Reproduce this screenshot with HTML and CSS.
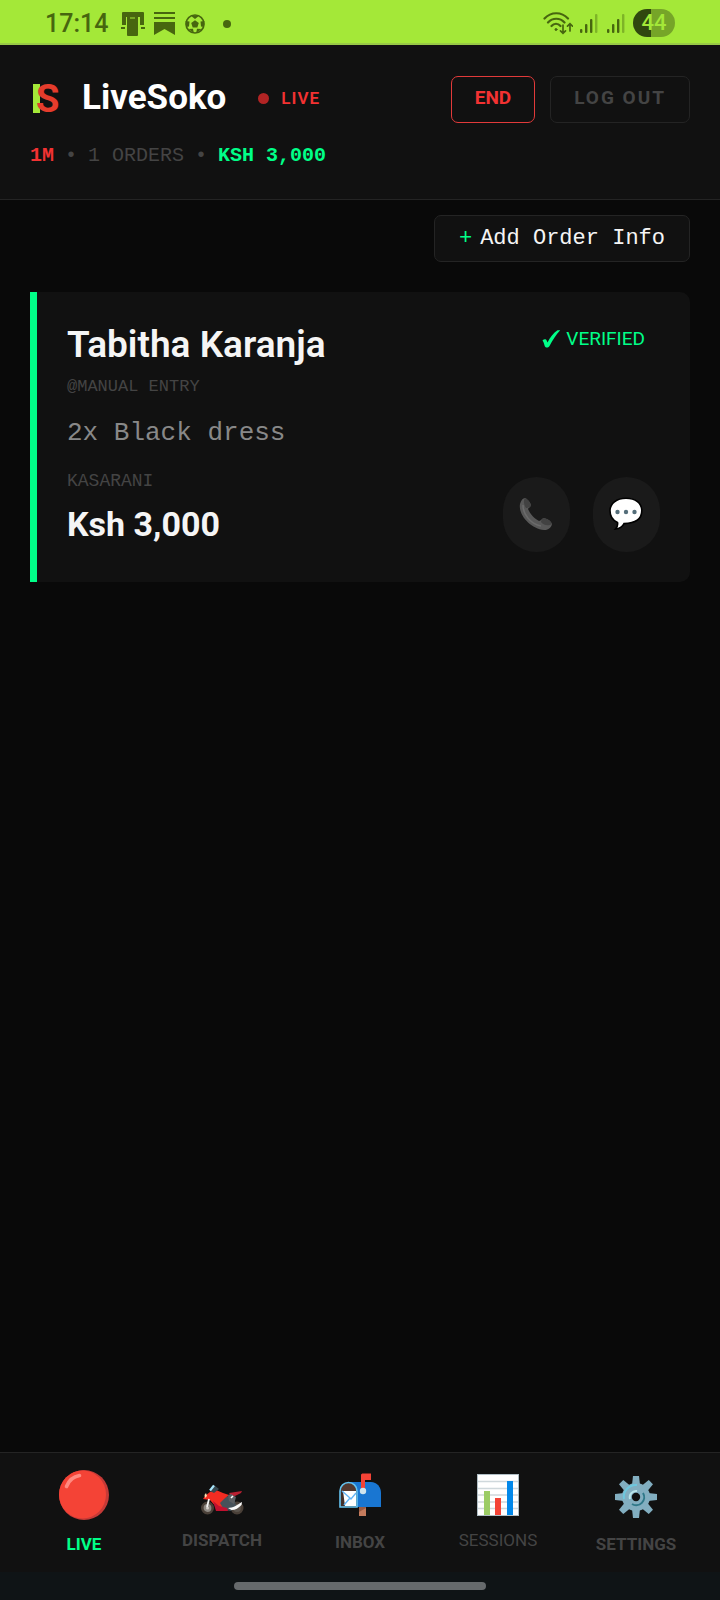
FILE: index.html
```html
<!DOCTYPE html>
<html lang="en">
<head>
    <meta charset="UTF-8">
    <meta name="viewport" content="width=device-width, initial-scale=1.0">
    <title>LiveSoko</title>
    <link rel="stylesheet" href="styles.css">
</head>
<body>
    <div class="status-bar">
        <div class="status-left">
            <span class="clock">17:14</span>
            <svg width="26" height="24" viewBox="0 0 26 24" fill="#47660f">
                <path d="M3 0h20q1 0 1 1v12h-4V5H6v8H2V1q0-1 1-1z"/>
                <path d="M1 15h4v2H1zM21 15h4v2h-4z"/>
                <rect x="7" y="4" width="11" height="20" rx="1"/>
                <path d="M10 5.500h5v1h-5z" fill="#a4e838"/>
            </svg>
            <svg width="22" height="24" viewBox="0 0 22 24" fill="#47660f">
                <path d="M0 0h21v2H0zM0 5h21v2H0zM0 10h21v13l-10.500-6L0 23z"/>
            </svg>
            <svg class="ball" width="20" height="20" viewBox="0 0 20 20">
                <circle cx="10" cy="10" r="9" fill="none" stroke="#47660f" stroke-width="1.600"/>
                <g fill="#47660f">
                    <path d="M10 6.200l3.800 2.800-1.500 4.400H7.700L6.200 9z"/>
                    <path d="M5.500 1.500h9L10 5zM.5 7l4 .5-.5 5-3 .5zM19.500 7l-4 .5.5 5 3 .5zM3.500 15l4.500-.3.800 4.300zM16.500 15l-4.500-.3-.8 4.300z"/>
                </g>
            </svg>
            <svg class="more-dot" width="8" height="8" viewBox="0 0 8 8"><circle cx="4" cy="4" r="4" fill="#47660f"/></svg>
        </div>
        <div class="status-right">
            <svg width="30" height="24" viewBox="0 0 30 24" fill="none" stroke="#47660f" stroke-width="2.200" stroke-linecap="round">
                <path d="M1.500 7.500C8 .5 18.500.5 25 7.500M5 11.500c4.500-5 12-5 16.500 0M8.500 15c2.500-3 6.500-3 9 0"/>
                <circle cx="13" cy="18.500" r="1" fill="#47660f" stroke-width="1"/>
                <path d="M20 14v8M17.500 19.800L20 22.300l2.500-2.500M27 20v-7M24.500 15.200L27 12.700l2.500 2.500" stroke-width="1.700"/>
            </svg>
            <svg width="21" height="21" viewBox="0 0 21 21" fill="#47660f">
                <rect x="1" y="16" width="2.400" height="4" rx="1"/>
                <rect x="6" y="11" width="2.400" height="9" rx="1"/>
                <rect x="11" y="6" width="2.400" height="14" rx="1"/>
                <rect x="16" y="1" width="2.400" height="19" rx="1" opacity=".4"/>
            </svg>
            <svg width="21" height="21" viewBox="0 0 21 21" fill="#47660f">
                <rect x="1" y="16" width="2.400" height="4" rx="1"/>
                <rect x="6" y="11" width="2.400" height="9" rx="1"/>
                <rect x="11" y="6" width="2.400" height="14" rx="1"/>
                <rect x="16" y="1" width="2.400" height="19" rx="1" opacity=".4"/>
            </svg>
            <span class="battery">44</span>
        </div>
    </div>

    <header class="header">
        <div class="header-row">
            <div class="brand">
                <svg class="logo" width="30" height="44" viewBox="0 0 30 44">
                    <rect x="3" y="8" width="7" height="29" fill="#a4e838"/>
                    <text class="logo-letter" x="6" y="36">S</text>
                </svg>
                <h1 class="title">LiveSoko</h1>
                <div class="live-badge"><span class="live-dot"></span>LIVE</div>
            </div>
            <div class="header-actions">
                <button type="button" class="btn btn-end">END</button>
                <button type="button" class="btn btn-logout">LOG OUT</button>
            </div>
        </div>
        <div class="stats">
            <span class="stats-time">1M</span>
            <span>•</span>
            <span>1 ORDERS</span>
            <span>•</span>
            <span class="stats-total">KSH 3,000</span>
        </div>
    </header>

    <main class="main">
        <div class="toolbar">
            <button type="button" class="btn btn-add"><span class="plus">+</span>Add Order Info</button>
        </div>

        <article class="order-card">
            <div class="order-top">
                <h2 class="customer">Tabitha Karanja</h2>
                <div class="verified">
                    <svg width="20" height="20" viewBox="0 0 20 20" fill="#00ff88">
                        <path d="M1.500 11.500c1.500-1.600 3.500-1.700 4.300.2l.7 1.800C9 8.500 12.500 4 16.500 1.300h2.700C15 5.800 11.500 11.500 8.500 17c-1.200 1.900-3.800 2.200-4.700.2C3 15 2.800 13 1.500 11.500z"/>
                    </svg>
                    VERIFIED
                </div>
            </div>
            <div class="handle">@MANUAL ENTRY</div>
            <div class="item">2x Black dress</div>
            <div class="order-bottom">
                <div>
                    <div class="location">KASARANI</div>
                    <div class="price">Ksh 3,000</div>
                </div>
                <div class="contact">
                    <button type="button" class="round-btn" aria-label="Call">
                        <svg width="34" height="34" viewBox="0 0 34 34">
                            <path d="M1 7C2 3 4 1 6 1c2 .5 5 4 6 7 0 2-3 3-3 4 2 5 7 10 11 12 2 0 3-3 5-3 4 1 7 3 8 6-1 4-4 6-8 6C12 32-1 18 1 7z" fill="#585858"/>
                            <path d="M6 1c2 .5 5 4 6 7 0 2-3 3-5 3C5 8 4 4 6 1zM22 25c0-2 2-4 3-4 4 1 7 3 8 6-3 2-8 2-11-2z" fill="#424242"/>
                            <path d="M4 8c0 10 8 19 18 21" fill="none" stroke="#6b6b6b" stroke-width="1.500"/>
                        </svg>
                    </button>
                    <button type="button" class="round-btn" aria-label="Message">
                        <svg width="34" height="34" viewBox="0 0 34 34">
                            <path d="M17 1.200c9.500 0 15.800 5 15.800 12.600S27 26.300 15 26.600c-1.500 3-4 5-8.500 5.400 2-2 2.500-4 2-6.500C4 23.500 1 19 1 13.800 1 6.500 7.500 1.200 17 1.200z" fill="#fff" stroke="#000" stroke-width="1.600"/>
                            <g fill="#546e7a">
                                <circle cx="8.500" cy="15" r="2.200"/>
                                <circle cx="17" cy="15" r="2.200"/>
                                <circle cx="25.500" cy="15" r="2.200"/>
                            </g>
                        </svg>
                    </button>
                </div>
            </div>
        </article>
    </main>

    <nav class="bottom-nav">
        <a class="nav-item active" href="#live">
            <svg width="50" height="50" viewBox="0 0 50 50">
                <circle cx="25" cy="25" r="25" fill="#c63a37"/>
                <ellipse cx="23.500" cy="24.500" rx="23.500" ry="24" fill="#f44336"/>
                <path d="M7.500 16.500C10 10 14.500 6.500 20.500 5.500" fill="none" stroke="#ff8a80" stroke-width="3.600" stroke-linecap="round"/>
            </svg>
            LIVE
        </a>
        <a class="nav-item" href="#dispatch">
            <svg width="44" height="42" viewBox="0 0 44 42">
                <circle cx="7.500" cy="34" r="5.200" fill="#8f8a84" stroke="#4a4038" stroke-width="2.600"/>
                <circle cx="7.500" cy="34" r="1.500" fill="#d5d0ca"/>
                <circle cx="37" cy="34" r="5.200" fill="#5c554e" stroke="#4a4038" stroke-width="2.600"/>
                <path d="M19 27l9-5 6 2 2 8-5 5-13-2z" fill="#47525a"/>
                <path d="M5 22l5-4 6-2 7 3 6 2-5 4-4 4 3 5h-6l-7-8-7-1z" fill="#f22c22"/>
                <path d="M13 27l6 5 8 2 1 3H16z" fill="#c2112f"/>
                <path d="M29 19l13-2-1 2-6 3-4 0z" fill="#b91f31"/>
                <path d="M28 21l3-1 5 3-2 7-5-3z" fill="#5c5f63"/>
                <path d="M10 17l4-6 5 4-5 4z" fill="#37474f"/>
                <path d="M10 16.500l4-5" stroke="#a8e5fa" stroke-width="2.200"/>
                <path d="M4.500 21l1.500-2 1 3-2 2z" fill="#ffe0b2"/>
                <path d="M9 25L7 33" stroke="#f5f5f5" stroke-width="1.800"/>
                <path d="M28 34c5 0 9-3 14-6l-.5 3c-3 3-6 5-10 5z" fill="#fafafa"/>
                <path d="M31 24l2-2" stroke="#fff" stroke-width="1.600"/>
            </svg>
            DISPATCH
        </a>
        <a class="nav-item" href="#inbox">
            <svg width="44" height="46" viewBox="0 0 44 46">
                <path d="M21 34h7v10h-7z" fill="#c47b5c"/>
                <path d="M21 34h7v2l-7 4z" fill="#9a5a42"/>
                <path d="M9 10h24c6 0 10 5 10 11v14H17z" fill="#1976d2"/>
                <path d="M2 35V19c0-5 4-8.500 8.500-8.500S19 14 19 19v16z" fill="#543930" stroke="#64c3f0" stroke-width="1.600"/>
                <path d="M4 19h14v15H5z" fill="#fff"/>
                <path d="M3 19h2l2 15H3z" fill="#42302b"/>
                <path d="M4 19l8 7 1 1 5-6M12 26l-6 7" fill="none" stroke="#64b5f6" stroke-width="1.400"/>
                <path d="M23 3c0-1 1-1.500 2-1.500h8V8h-6v10h-4z" fill="#f44336"/>
                <circle cx="25" cy="19" r="3.200" fill="#cfe4ee"/>
            </svg>
            INBOX
        </a>
        <a class="nav-item plain" href="#sessions">
            <svg width="42" height="42" viewBox="0 0 42 42">
                <rect x=".5" y=".5" width="41" height="41" fill="#fff" stroke="#b0bec5"/>
                <path d="M1 7.500h40M1 14.500h40M1 21h40M1 28h40M1 34.500h40" stroke="#cfd8dc" stroke-width="1.300"/>
                <rect x="7" y="17" width="6" height="24" fill="#9ccc65"/>
                <rect x="18" y="24" width="6" height="17" fill="#f44336"/>
                <rect x="30" y="7" width="6" height="34" fill="#0288ea"/>
            </svg>
            SESSIONS
        </a>
        <a class="nav-item" href="#settings">
            <svg width="50" height="50" viewBox="-25 -27 50 50">
                <g fill="#82aec0">
                    <path id="tooth" d="M-4-12l1-9h6l1 9z"/>
                    <use href="#tooth" transform="rotate(45)"/>
                    <use href="#tooth" transform="rotate(90)"/>
                    <use href="#tooth" transform="rotate(135)"/>
                    <use href="#tooth" transform="rotate(180)"/>
                    <use href="#tooth" transform="rotate(225)"/>
                    <use href="#tooth" transform="rotate(270)"/>
                    <use href="#tooth" transform="rotate(315)"/>
                    <circle r="14"/>
                </g>
                <path d="M-12 2A12 12 0 0 1 1-12" fill="none" stroke="#6ec8de" stroke-width="2"/>
                <path d="M-6 2A6.300 6.300 0 0 1 1-6" fill="none" stroke="#b9e4ea" stroke-width="2"/>
                <path d="M7-4A8 8 0 0 1-4 7" fill="none" stroke="#2f7889" stroke-width="2"/>
                <circle r="4.200" fill="#111"/>
            </svg>
            SETTINGS
        </a>
    </nav>
    <div class="gesture-bar"><div class="gesture-pill"></div></div>
</body>
</html>
```
FILE: styles.css
```css
* {
    box-sizing: border-box;
}
body {
    margin: 0;
    min-height: 100vh;
    display: flex;
    flex-direction: column;
    background-color: #090909;
    color: #f5f5f5;
    font-family: Roboto, sans-serif;
}
h1, h2 {
    margin: 0;
}
svg {
    display: block;
    flex-shrink: 0;
}
button {
    font-family: inherit;
    cursor: pointer;
}

/* phone status bar */
.status-bar {
    height: 45px;
    padding: 0 45px;
    display: flex;
    justify-content: space-between;
    align-items: center;
    background-color: #a4e838;
    border-bottom: 2px solid #98c946;
    color: #47660f;
}
.status-left,
.status-right {
    display: flex;
    align-items: center;
}
.status-left {
    gap: 8px;
    padding-top: 4px;
}
.status-right {
    gap: 6px;
    padding-top: 3px;
}
.clock {
    font-size: 25px;
    line-height: 28px;
    font-weight: 500;
    margin-right: 4px;
}
.ball {
    margin-left: 1px;
}
.more-dot {
    margin-left: 10px;
}
.battery {
    width: 42px;
    height: 28px;
    border-radius: 14px;
    background: linear-gradient(to right, #30470f 43%, #76a528 43%);
    color: #a4e838;
    font-size: 22px;
    line-height: 28px;
    font-weight: 500;
    text-align: center;
}

/* header */
.header {
    padding: 31px 30px 31px;
    background-color: #111;
    border-bottom: 1px solid #242424;
}
.header-row {
    display: flex;
    align-items: flex-start;
    justify-content: space-between;
}
.brand {
    display: flex;
    align-items: center;
}
.logo-letter {
    font-size: 38px;
    font-weight: 700;
    fill: #e53c2c;
}
.title {
    margin-left: 22px;
    color: #fff;
    font-size: 35px;
    line-height: 44px;
    font-weight: 700;
}
.live-badge {
    margin-left: 32px;
    display: flex;
    align-items: center;
    gap: 12px;
    color: #f33232;
    font-size: 17px;
    line-height: 24px;
    font-weight: 600;
    letter-spacing: 1px;
}
.live-dot {
    width: 11px;
    height: 11px;
    border-radius: 50%;
    background-color: #b22424;
}
.header-actions {
    display: flex;
    gap: 15px;
}
.btn {
    height: 47px;
    padding: 0 23px 4px;
    background-color: #111;
    border: 1px solid #242424;
    border-radius: 7px;
    font-size: 19px;
    font-weight: 700;
}
.btn-end {
    border-color: #e23a3a;
    color: #f33232;
}
.btn-logout {
    color: #444;
    letter-spacing: 2px;
}
.stats {
    margin-top: 21px;
    display: flex;
    gap: 11px;
    color: #444;
    font-family: "Liberation Mono", monospace;
    font-size: 20px;
    line-height: 24px;
}
.stats-time {
    color: #f33232;
    font-weight: 700;
}
.stats-total {
    color: #00ff88;
    font-weight: 700;
}

/* orders */
.main {
    flex: 1;
    padding: 15px 30px;
}
.toolbar {
    display: flex;
    justify-content: flex-end;
    margin-bottom: 30px;
}
.btn-add {
    padding: 0 24px;
    display: flex;
    align-items: center;
    gap: 8px;
    color: #f5f5f5;
    font-family: "Liberation Mono", monospace;
    font-size: 22px;
    font-weight: 400;
}
.plus {
    color: #00ff88;
}
.order-card {
    padding: 30px;
    background-color: #111;
    border-left: 7px solid #00ff88;
    border-radius: 0 10px 10px 0;
}
.order-top {
    display: flex;
    justify-content: space-between;
    align-items: flex-start;
}
.customer {
    font-size: 37px;
    line-height: 46px;
    font-weight: 600;
}
.verified {
    display: flex;
    align-items: center;
    gap: 5px;
    padding: 5px 15px;
    color: #00ff88;
    font-size: 19px;
    line-height: 24px;
}
.handle {
    margin-top: 7px;
    color: #444;
    font-family: "Liberation Mono", monospace;
    font-size: 17px;
    line-height: 24px;
}
.item {
    margin-top: 18px;
    color: #888;
    font-family: "Liberation Mono", monospace;
    font-size: 26px;
    line-height: 32px;
}
.order-bottom {
    display: flex;
    justify-content: space-between;
    margin-top: 20px;
}
.location {
    color: #444;
    font-family: "Liberation Mono", monospace;
    font-size: 18px;
    line-height: 24px;
}
.price {
    margin-top: 10px;
    font-size: 34px;
    line-height: 42px;
    font-weight: 700;
}
.contact {
    display: flex;
    gap: 23px;
    padding-top: 8px;
}
.round-btn {
    width: 67px;
    height: 75px;
    padding: 0 2px 2px 0;
    display: flex;
    justify-content: center;
    align-items: center;
    background-color: #1a1a1a;
    border: none;
    border-radius: 34px;
}

/* bottom navigation */
.bottom-nav {
    height: 120px;
    padding: 0 15px;
    display: flex;
    background-color: #111;
    border-top: 1px solid #242424;
}
.nav-item {
    flex: 1;
    display: flex;
    flex-direction: column;
    justify-content: center;
    align-items: center;
    gap: 12px;
    color: #444;
    font-size: 17px;
    line-height: 24px;
    font-weight: 700;
    text-decoration: none;
}
.nav-item.active {
    color: #00ff88;
}
.nav-item.plain {
    font-weight: 400;
}
.gesture-bar {
    height: 28px;
    display: flex;
    justify-content: center;
    align-items: center;
    background-color: #0f1416;
}
.gesture-pill {
    width: 35%;
    height: 8px;
    border-radius: 4px;
    background-color: #666a6c;
}
```
